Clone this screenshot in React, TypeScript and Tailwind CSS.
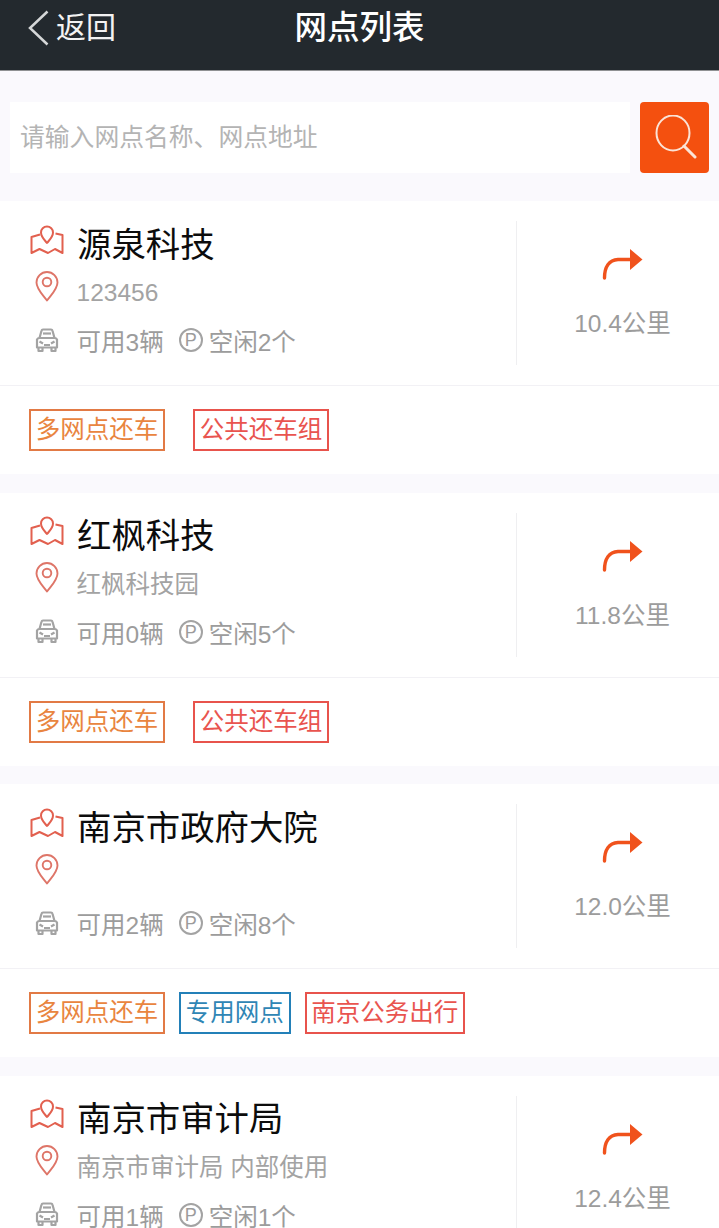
const FONT = "font-['Liberation_Sans','Noto_Sans_CJK_SC',sans-serif]";

type Tag = { label: string; tone: "orange" | "red" | "blue"; wide?: boolean };

type Station = {
  name: string;
  address: string;
  cars: number;
  spaces: number;
  distance: string;
  tags: Tag[];
};

const stations: Station[] = [
  {
    name: "源泉科技",
    address: "123456",
    cars: 3,
    spaces: 2,
    distance: "10.4公里",
    tags: [
      { label: "多网点还车", tone: "orange" },
      { label: "公共还车组", tone: "red", wide: true },
    ],
  },
  {
    name: "红枫科技",
    address: "红枫科技园",
    cars: 0,
    spaces: 5,
    distance: "11.8公里",
    tags: [
      { label: "多网点还车", tone: "orange" },
      { label: "公共还车组", tone: "red", wide: true },
    ],
  },
  {
    name: "南京市政府大院",
    address: "",
    cars: 2,
    spaces: 8,
    distance: "12.0公里",
    tags: [
      { label: "多网点还车", tone: "orange" },
      { label: "专用网点", tone: "blue" },
      { label: "南京公务出行", tone: "red" },
    ],
  },
  {
    name: "南京市审计局",
    address: "南京市审计局 内部使用",
    cars: 1,
    spaces: 1,
    distance: "12.4公里",
    tags: [],
  },
];

const toneClass = {
  orange: "border-[#e27a45] text-[#e9853f]",
  red: "border-[#e8534c] text-[#e9544f]",
  blue: "border-[#2380b8] text-[#2f86b5]",
};

function MapIcon() {
  return (
    <svg width="34" height="31" viewBox="0 0 34 31" fill="none" stroke="#e2604f" strokeWidth="2" strokeLinejoin="round">
      <path d="M17 19c-2.500-3.200-6-6-6-10.500a6 6 0 0 1 12 0c0 4.500-3.500 7.300-6 10.500z" />
      <path d="M10 10.500 1.500 13v16l8-4 8.500 4 7-4 7.500 4V11l-7-1.500" />
    </svg>
  );
}

function PinIcon() {
  return (
    <svg width="24" height="31" viewBox="0 0 24 31" fill="none" stroke="#de7568" strokeWidth="1.900" strokeLinejoin="round">
      <path d="M12 29.500C7.500 23.500 1.500 18 1.500 11.500a10.500 10.500 0 0 1 21 0C22.500 18 16.500 23.500 12 29.500z" />
      <circle cx="12" cy="11" r="4.300" />
    </svg>
  );
}

function CarIcon() {
  return (
    <svg width="24" height="25" viewBox="0 0 24 25" fill="none" stroke="#a3a3a3" strokeWidth="2.200" strokeLinejoin="round">
      <path d="M4.500 10 6.500 2.800c.2-.8.700-1.300 1.500-1.300h8c.8 0 1.300.5 1.500 1.300L19.500 10" />
      <path d="M8 5.500h8" />
      <path d="M2 11.500c.5-1 1.500-1.500 2.500-1.500h15c1 0 2 .5 2.500 1.500v8H2z" />
      <path d="M3.500 19.500v3.500h4v-3.500M16.500 19.500v3.500h4v-3.500" />
      <path d="M4.500 13.500 8 15.500M19.500 13.500 16 15.500M9 17h6" />
    </svg>
  );
}

function TurnIcon() {
  return (
    <svg width="41" height="32" viewBox="0 0 41 32" fill="none">
      <path d="M2.500 30C2.500 19 7 12 16 11.500H29" stroke="#f0521c" strokeWidth="3.400" strokeLinecap="round" />
      <path d="M28 1 40.500 11.500 28 22z" fill="#f0521c" />
    </svg>
  );
}

function SearchIcon() {
  return (
    <svg width="44" height="46" viewBox="0 0 44 46" fill="none" stroke="#fbe3d6" strokeLinecap="round">
      <ellipse cx="20" cy="18" rx="16.500" ry="17.500" strokeWidth="2" />
      <path d="m31 31 11 11" strokeWidth="3" />
    </svg>
  );
}

function StationCard({ station }: { station: Station }) {
  return (
    <div className="mb-[18.5px] h-[273px] bg-white">
      <div className="flex h-[185px] border-b border-[#f2f1f5] pt-[20px]">
        <div className="min-w-0 flex-1 pl-[30px]">
          <div className="flex h-[48px] items-center">
            <div className="-mt-[12px] w-[47px] shrink-0">
              <MapIcon />
            </div>
            <span className="text-[34.4px] leading-none text-[#0c0c0c]">{station.name}</span>
          </div>
          <div className="flex h-[46px] items-center">
            <div className="-mt-[12px] w-[46.5px] shrink-0 pl-[5px]">
              <PinIcon />
            </div>
            <span className="pt-[3px] text-[24.5px] leading-none text-[#a3a3a3]">{station.address}</span>
          </div>
          <div className="flex h-[54px] items-center text-[24.5px] leading-none text-[#9c9c9c]">
            <div className="-mt-[4px] w-[46.5px] shrink-0 pl-[5px]">
              <CarIcon />
            </div>
            <span className="pt-[3px]">可用{station.cars}辆</span>
            <span className="-mt-[4px] ml-[15px] flex h-[24px] w-[24px] items-center justify-center rounded-full border-2 border-[#a3a3a3] text-[18px]">
              P
            </span>
            <span className="ml-[6px] pt-[3px]">空闲{station.spaces}个</span>
          </div>
        </div>
        <div className="flex h-[144px] w-[203px] shrink-0 flex-col items-center border-l border-[#efeff1] pl-[9px]">
          <div className="mt-[27px] h-[32px]">
            <TurnIcon />
          </div>
          <span className="mt-[32px] text-[24.5px] leading-none text-[#9c9c9c]">{station.distance}</span>
        </div>
      </div>
      {station.tags.length > 0 && (
        <div className="flex gap-[14px] pl-[29px] pt-[23px]">
          {station.tags.map((tag) => (
            <span
              key={tag.label}
              className={`flex h-[42px] items-center border-2 px-[4.75px] pt-[1px] text-[24.5px] leading-none ${toneClass[tag.tone]} ${tag.wide ? "ml-[14px]" : ""}`}
            >
              {tag.label}
            </span>
          ))}
        </div>
      )}
    </div>
  );
}

export default function App() {
  return (
    <div className={`h-[1228px] overflow-hidden bg-[#faf9fd] ${FONT}`}>
      <header className="grid h-[71px] grid-cols-[1fr_auto_1fr] items-center border-b border-[#8f9193] bg-[#23292e] pb-[14px] text-white">
        <div className="flex items-center pl-[28px]">
          <svg width="21" height="36" viewBox="0 0 21 36" fill="none" stroke="#d5d7d8" strokeWidth="2.500">
            <path d="M19.500 1.500 2 18l17.500 16.500" />
          </svg>
          <span className="ml-[7px] text-[30px] leading-none text-[#f2f2f2]">返回</span>
        </div>
        <h1 className="text-[32.5px] font-medium leading-none">网点列表</h1>
        <div />
      </header>
      <div className="flex h-[130px] gap-[10px] px-[10px] pt-[31px]">
        <input
          readOnly
          placeholder="请输入网点名称、网点地址"
          className="h-[71px] min-w-0 flex-1 bg-white pl-[10px] text-[24.8px] outline-none placeholder:text-[#b4b4b4]"
        />
        <button className="flex h-[71px] w-[69px] items-center justify-center rounded-[4px] bg-[#f4500f]">
          <SearchIcon />
        </button>
      </div>
      {stations.map((station) => (
        <StationCard key={station.name} station={station} />
      ))}
    </div>
  );
}
